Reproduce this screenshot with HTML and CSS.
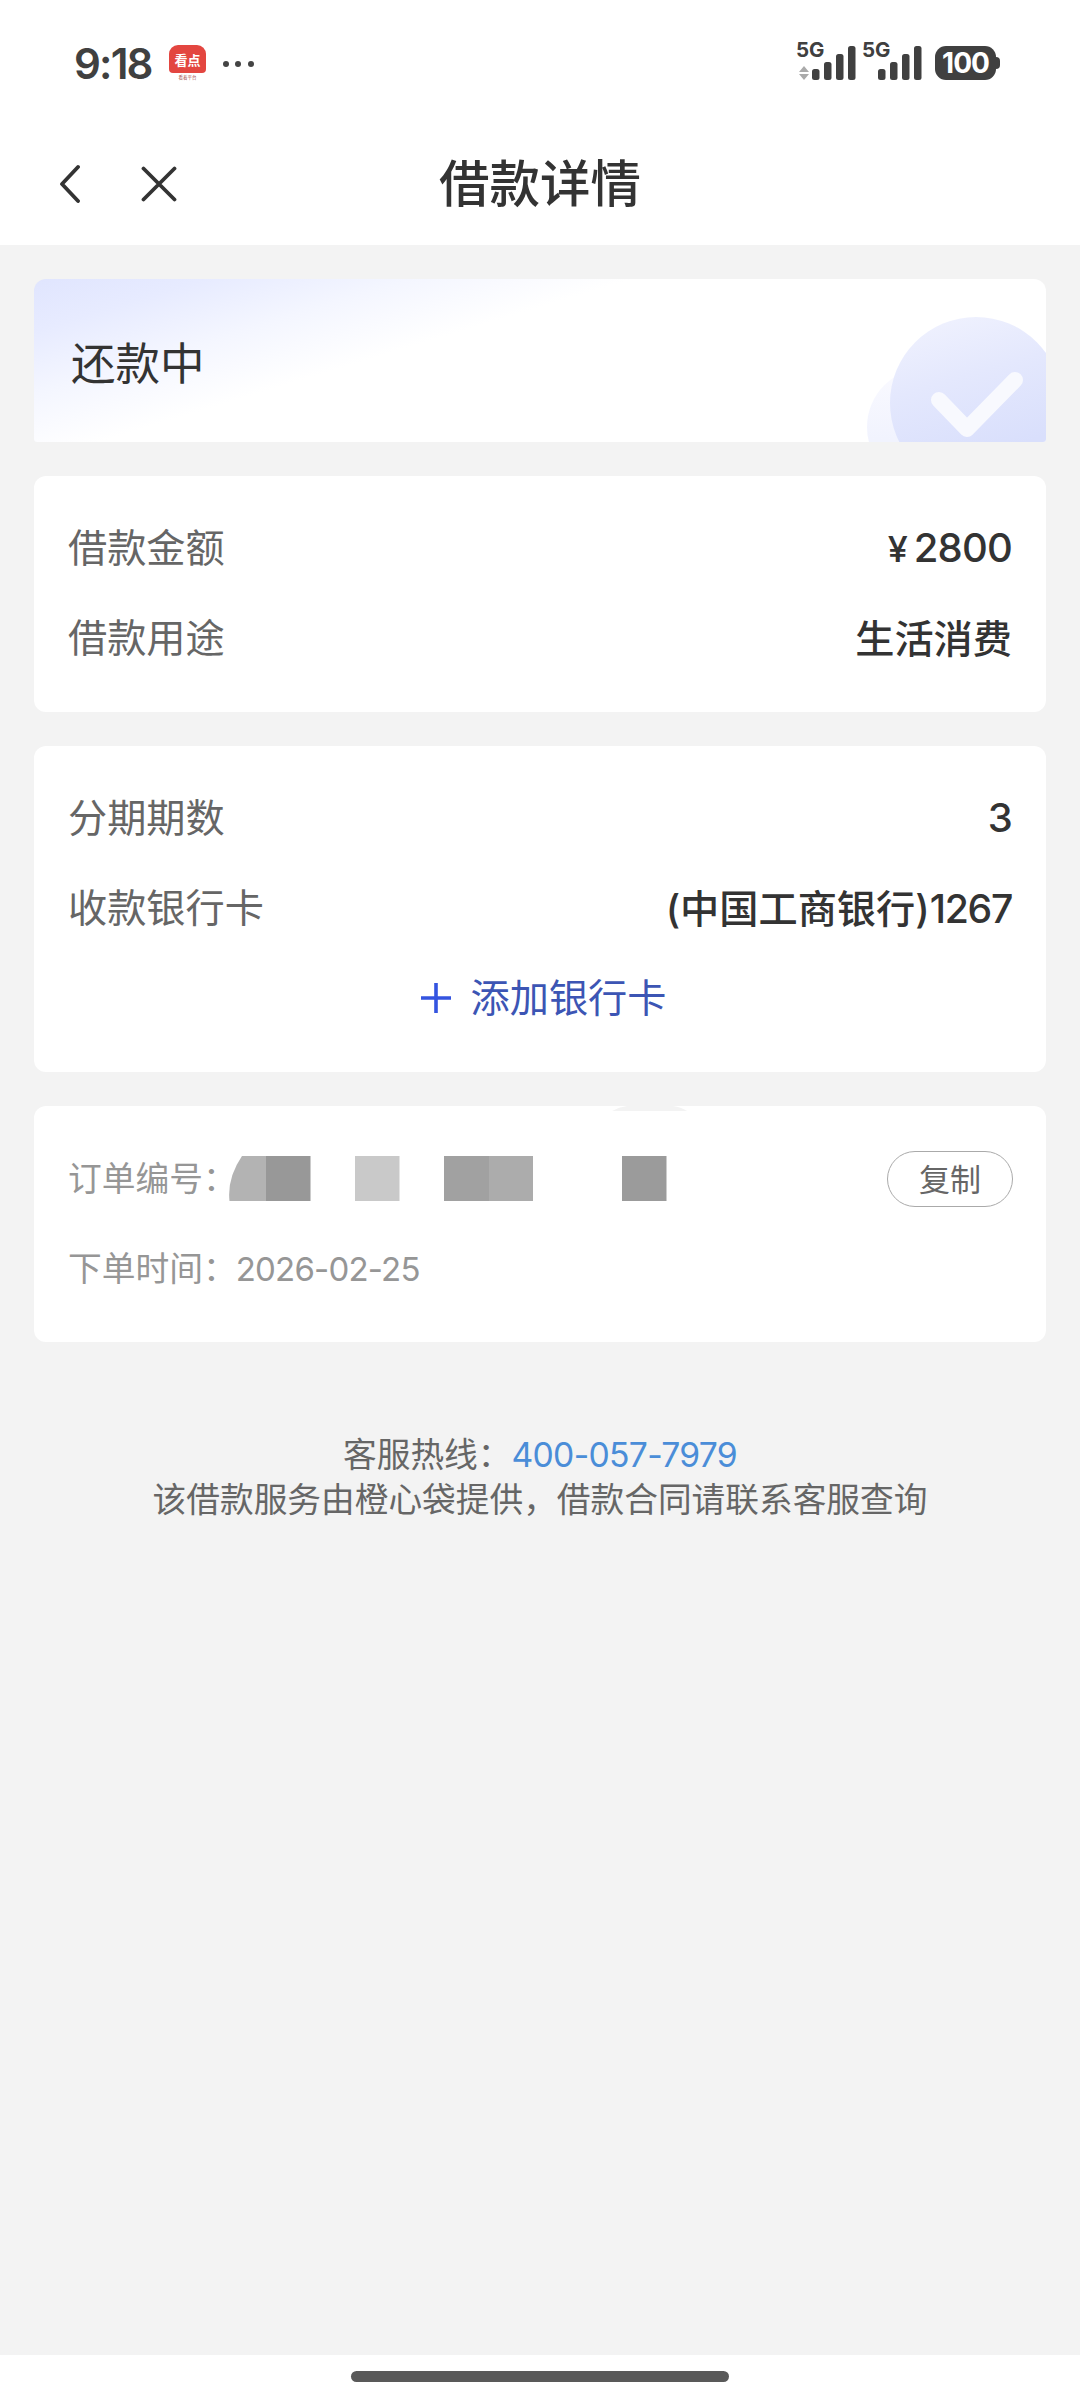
FILE: index.html
```html
<!DOCTYPE html>
<html lang="zh-CN">
<head>
<meta charset="utf-8">
<title>借款详情</title>
<link rel="stylesheet" href="styles.css">
</head>
<body>
<div class="screen">
  <div class="statusbar">
    <div class="status-left">
      <span class="clock">9:18</span>
      <span class="app-badge"><span class="app-name">看点</span><span class="app-sub">看着平台</span></span>
      <svg class="dots" width="32" height="8" viewBox="0 0 32 8" fill="#444"><circle cx="4" cy="4" r="3"/><circle cx="16" cy="4" r="3"/><circle cx="29" cy="4" r="3"/></svg>
    </div>
    <div class="status-right">
      <span class="signal">
        <span class="net">5G</span>
        <svg width="60" height="40" viewBox="0 0 60 40" fill="#404040"><path fill="#aaa" d="M3 32l5-6 5 6zM3 34h10l-5 6z"/><rect x="16" y="29" width="7.500" height="11" rx="2.500"/><rect x="28" y="22" width="7.500" height="18" rx="2.500"/><rect x="40" y="14" width="7.500" height="26" rx="2.500"/><rect x="52" y="6" width="7.500" height="34" rx="2.500"/></svg>
      </span>
      <span class="signal">
        <span class="net">5G</span>
        <svg width="60" height="40" viewBox="0 0 60 40" fill="#404040"><rect x="16" y="29" width="7.500" height="11" rx="2.500"/><rect x="28" y="22" width="7.500" height="18" rx="2.500"/><rect x="40" y="14" width="7.500" height="26" rx="2.500"/><rect x="52" y="6" width="7.500" height="34" rx="2.500"/></svg>
      </span>
      <span class="battery">100</span><span class="nub"></span>
    </div>
  </div>

  <header class="navbar">
    <div class="nav-icons">
      <svg width="22" height="40" viewBox="0 0 22 40" fill="none" stroke="#333" stroke-width="3.800" stroke-linecap="round" stroke-linejoin="round"><path d="M20 3L4 20l16 17"/></svg>
      <svg width="36" height="40" viewBox="0 0 36 40" fill="none" stroke="#333" stroke-width="3.800" stroke-linecap="round"><path d="M2.500 4.500l31 31M33.500 4.500l-31 31"/></svg>
    </div>
    <h1 class="title">借款详情</h1>
    <div class="nav-icons"></div>
  </header>

  <main class="content">
    <section class="banner">
      <span class="state">还款中</span>
      <svg class="seal" width="180" height="127" viewBox="0 0 180 127">
        <defs><linearGradient id="seal" x1="0.300" y1="0" x2="0.600" y2="1"><stop offset="0" stop-color="#eff1fe"/><stop offset="0.350" stop-color="#e4e8fd"/><stop offset="0.800" stop-color="#d9dffc"/></linearGradient>
        <linearGradient id="shade" x1="0" y1="0" x2="0" y2="1"><stop offset="0" stop-color="#fafaff"/><stop offset="0.600" stop-color="#f1f3fe"/></linearGradient></defs>
        <circle cx="60" cy="112" r="59" fill="url(#shade)"/>
        <circle cx="110" cy="88" r="86" fill="url(#seal)"/>
        <path d="M73 85l28 29L149 65" fill="none" stroke="#f8f9fe" stroke-width="16" stroke-linecap="round" stroke-linejoin="round"/>
      </svg>
    </section>

    <section class="card">
      <div class="row"><span class="label">借款金额</span><span class="value money"><span class="yen">¥</span><span class="amount">2800</span></span></div>
      <div class="row"><span class="label">借款用途</span><span class="value">生活消费</span></div>
    </section>

    <section class="card">
      <div class="row"><span class="label">分期期数</span><span class="value money amount">3</span></div>
      <div class="row"><span class="label">收款银行卡</span><span class="value">(中国工商银行)<span class="tail">1267</span></span></div>
      <div class="row add">
        <svg width="30" height="30" viewBox="0 0 30 30" stroke="#3454e0" stroke-width="3.600"><path d="M15 0v30M0 15h30"/></svg>
        <span class="add-text">添加银行卡</span>
      </div>
    </section>

    <section class="card order">
      <svg class="cap" width="80" height="5" viewBox="0 0 80 5"><path d="M5 5Q12 1 20 0H66Q74 1 80 5z" fill="#f3f3f3"/></svg>
      <div class="row">
        <span class="key">订单编号：</span>
        <svg class="mask" width="438" height="45" viewBox="0 0 438 45"><path d="M13 0H37V45H.500Q-2 22 13 0z" fill="#b3b3b3"/><path d="M37 0h44.500v45H37z" fill="#989898"/><path d="M126 0h44.500v45H126z" fill="#c9c9c9"/><path d="M215 0h45v45h-45z" fill="#a1a1a1"/><path d="M260 0h44v45h-44z" fill="#acacac"/><path d="M393 0h44.500v45H393z" fill="#9b9b9b"/></svg>
        <button class="copy">复制</button>
      </div>
      <div class="row"><span class="key">下单时间：</span><span class="date">2026-02-25</span></div>
    </section>

    <footer class="help">
      <p>客服热线：<a class="phone">400-057-7979</a></p>
      <p>该借款服务由橙心袋提供，借款合同请联系客服查询</p>
    </footer>
  </main>
  <div class="homebar"><span class="handle"></span></div>
</div>
</body>
</html>
```
FILE: styles.css
```css
* { box-sizing: border-box; }
body { margin: 0; background: #f3f3f3; }
.screen {
  width: 1080px; height: 2400px; display: flex; flex-direction: column;
  background: #f3f3f3; color: #333; overflow: hidden;
  font-family: Inter, "Noto Sans CJK SC", sans-serif;
}
svg { display: block; flex: none; }

.statusbar { height: 126px; background: #fff; display: flex; justify-content: space-between; padding: 0 80px 0 74px; }
.status-left { height: 127px; display: flex; align-items: center; }
.clock { font-size: 42px; font-weight: 600; color: #404040; width: 95px; letter-spacing: -1.8px; white-space: nowrap; }
.app-badge { width: 37px; margin-top: -1px; display: flex; flex-direction: column; align-items: center; }
.app-name { width: 37px; height: 28px; border-radius: 9px 9px 4px 4px; background: #e34640; color: #fff; font: 700 13px/30px "Noto Sans CJK SC", sans-serif; text-align: center; }
.app-sub { font: 400 4.5px/8px "Noto Sans CJK SC", sans-serif; color: #a55; }
.dots { margin-left: 16px; }
.status-right { display: flex; padding-top: 40px; }
.signal { position: relative; width: 66px; }
.net { position: absolute; left: 0; top: 0; font: 700 20.5px/20px Inter, sans-serif; color: #404040; }
.battery { margin: 6px 0 0 7px; width: 61px; height: 34px; border-radius: 11px; background: #404040; color: #fff; font: 700 28px/34px Inter, sans-serif; text-align: center; letter-spacing: -1px; }
.nub { margin-top: 17px; width: 4px; height: 12px; border-radius: 0 4px 4px 0; background: #404040; }

.navbar { height: 119px; background: #fff; display: grid; grid-template-columns: 1fr auto 1fr; align-items: center; padding: 0 58px 3px; }
.nav-icons { display: flex; gap: 61px; }
.title { margin: 0; padding-bottom: 9px; font-size: 50.5px; font-weight: 500; line-height: 60px; font-family: "Noto Sans CJK SC", sans-serif; }

.content { flex: 1; padding: 34px 34px 0; display: flex; flex-direction: column; gap: 34px; }
.banner { height: 163px; flex: none; border-radius: 12px 12px 3px 3px; overflow: hidden; display: flex; align-items: center; justify-content: space-between; padding-left: 37px; background: #fff linear-gradient(163deg, #e0e5fe 0, #e7ebff 50px, #f4f6ff 110px, #fff 175px); }
.state { font-size: 44.5px; line-height: 60px; padding-top: 6px; }
.seal { align-self: flex-end; }

.card { position: relative; flex: none; background: #fff; border-radius: 12px; padding: 27px 34px 29px; }
.row { height: 90px; display: flex; align-items: center; justify-content: space-between; font-size: 39.2px; }
.label { color: #666; padding-bottom: 6px; }
.value { font-weight: 500; color: #333; display: flex; align-items: baseline; padding-bottom: 5px; }
.money { padding-bottom: 1px; }
.amount { font-size: 40px; letter-spacing: -0.8px; }
.tail { letter-spacing: -1.3px; }
.yen { font-size: 36px; margin-right: 6px; }
.add { justify-content: center; gap: 20px; color: #3c55b4; padding-left: 7px; }
.add-text { padding-bottom: 6px; }

.order .row { justify-content: flex-start; font-size: 33.75px; color: #969696; }
.key { padding-bottom: 3px; }
.cap { position: absolute; left: 573px; top: 0; }
.mask { margin-left: -8px; }
.copy { margin: 2px -1px 0 auto; width: 126px; height: 56px; padding: 0 0 2px; border: 1px solid #aaa; border-radius: 28px; background: #fff; color: #666; font: 400 31px/50px "Noto Sans CJK SC", sans-serif; }
.date { font-size: 33px; letter-spacing: -0.8px; margin-left: -1px; padding-top: 2px; }

.help { margin-top: 56px; text-align: center; font-size: 33.7px; line-height: 45px; color: #666; }
.help p { margin: 0; }
.phone { color: #4a8dd8; letter-spacing: -0.7px; }

.homebar { height: 45px; background: #fff; padding-top: 16px; }
.handle { display: block; width: 378px; height: 11px; margin: 0 auto; border-radius: 6px; background: #595959; }
```
